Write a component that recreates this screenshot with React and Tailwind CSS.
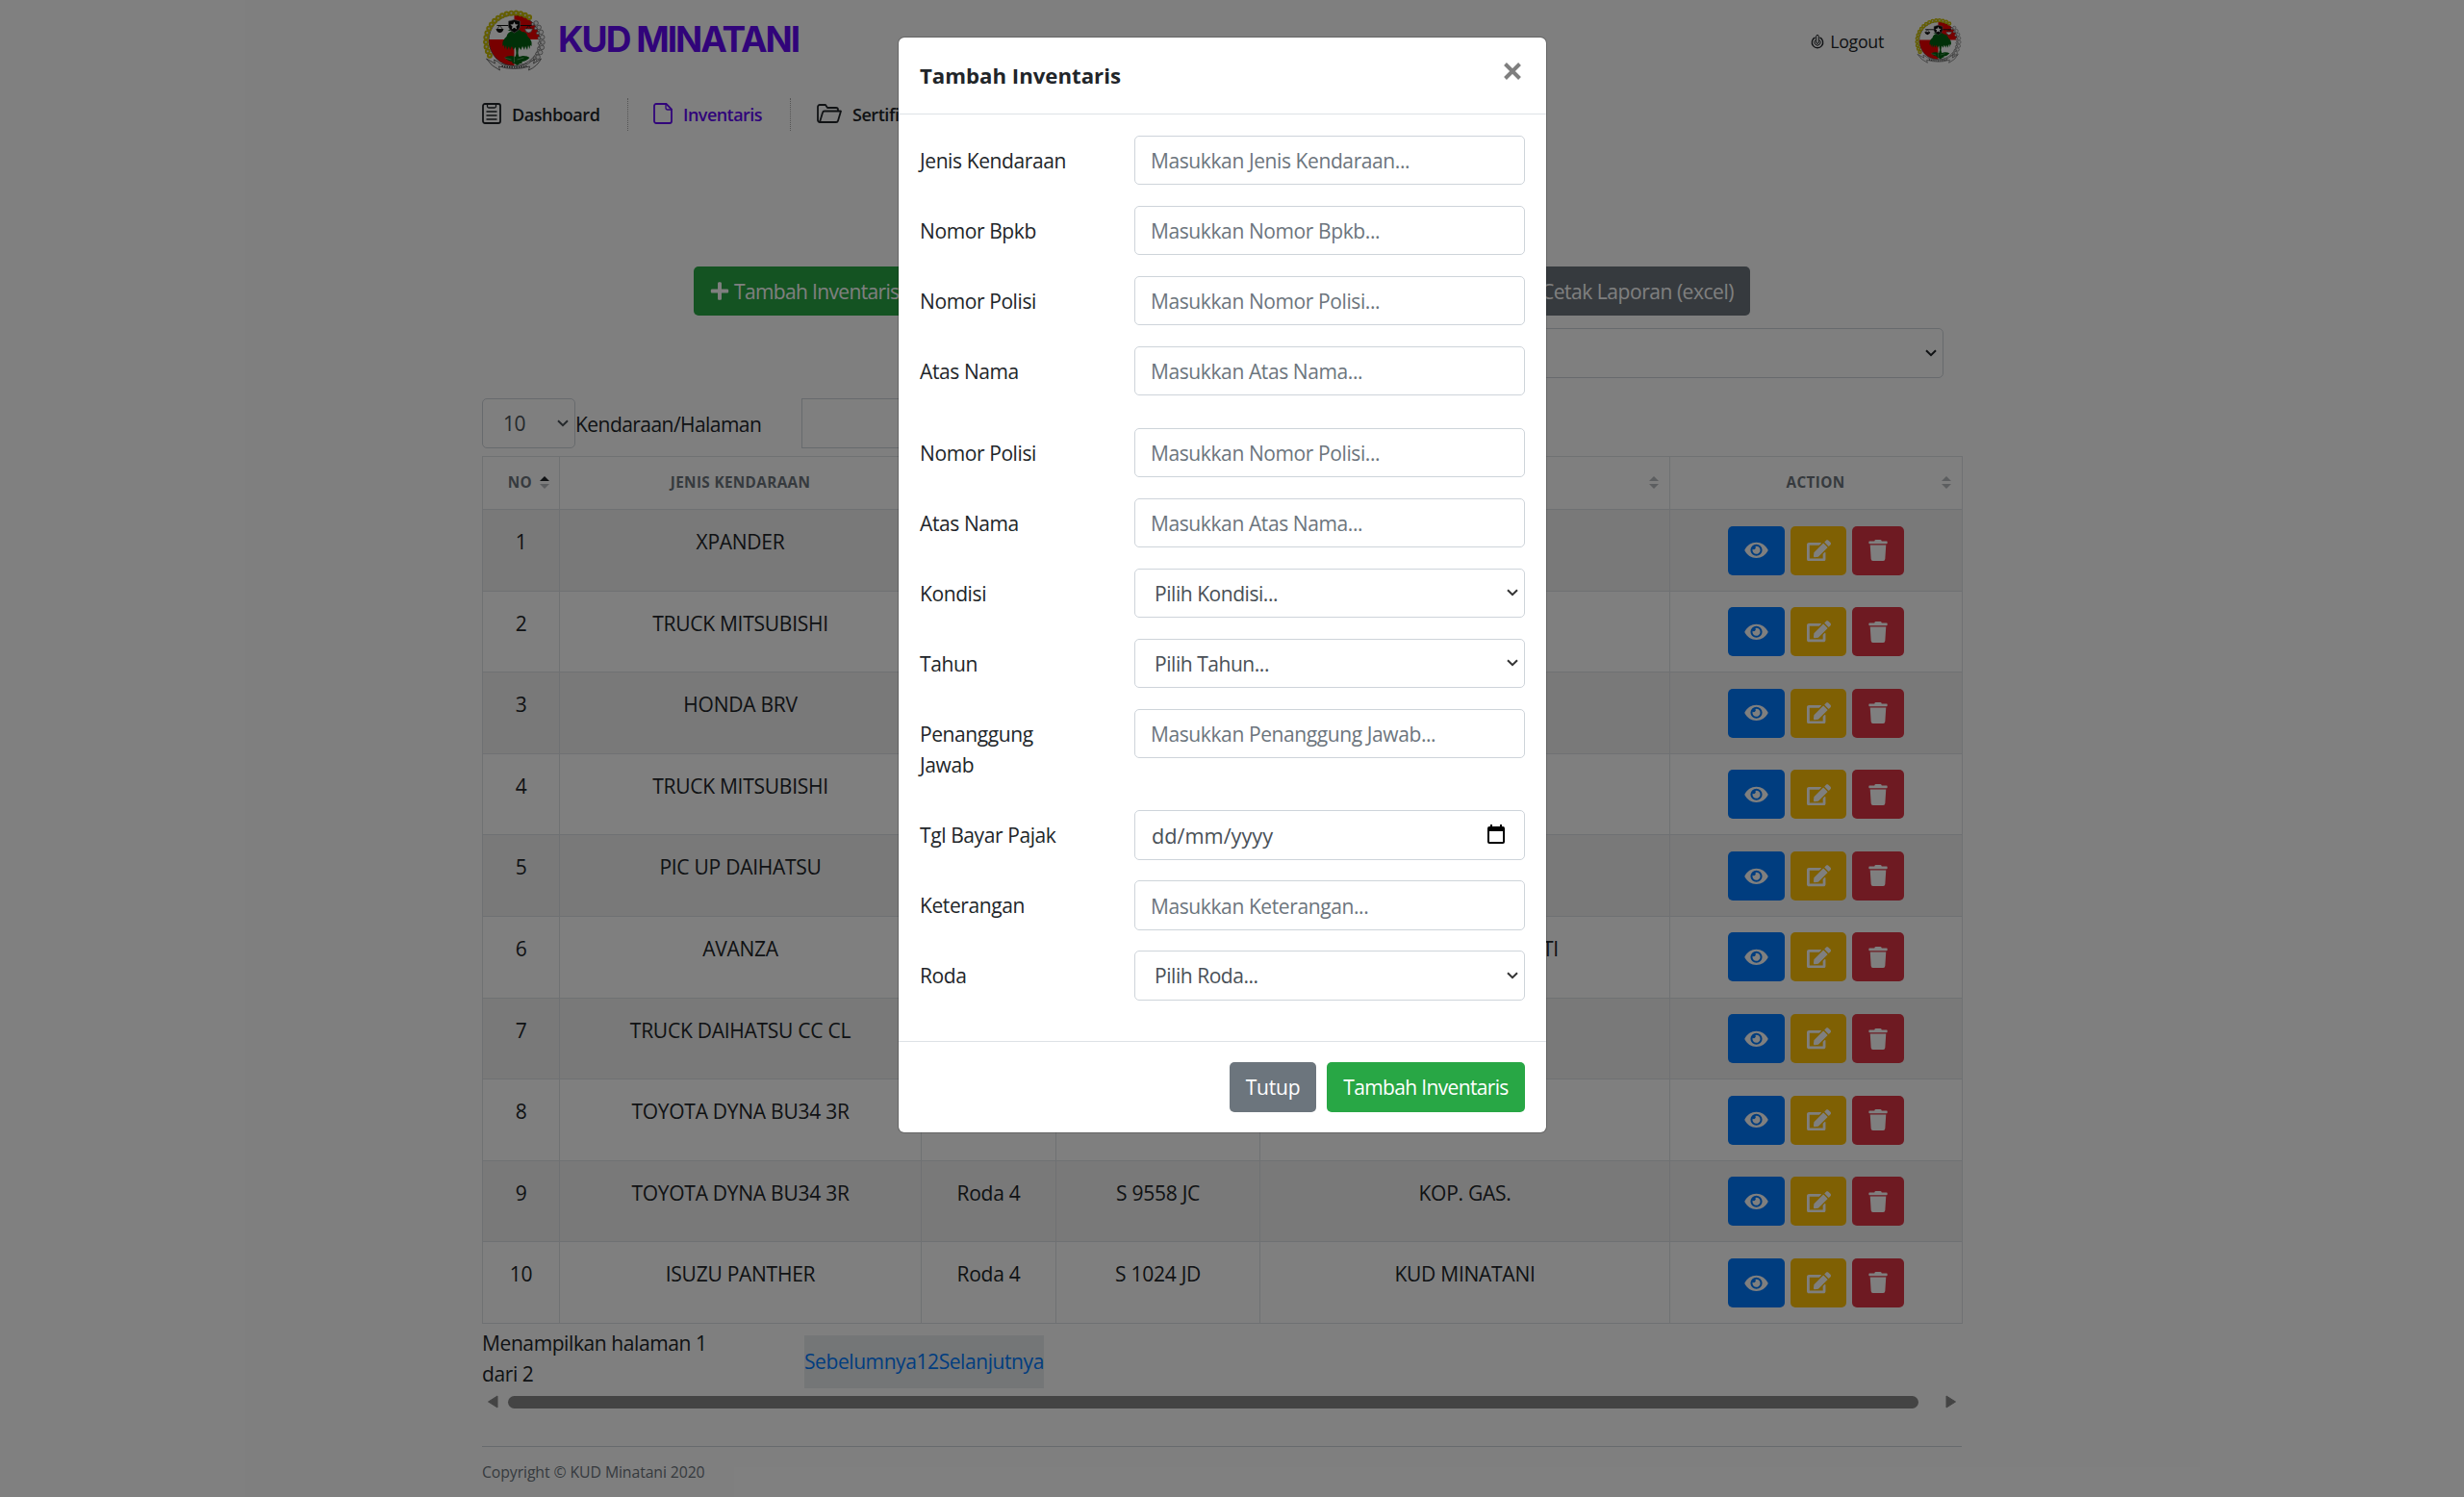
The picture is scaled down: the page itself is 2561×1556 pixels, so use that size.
import { FaEdit, FaEye, FaPlus, FaTrash } from "react-icons/fa";

const rows = [
  { name: "XPANDER" },
  { name: "TRUCK MITSUBISHI" },
  { name: "HONDA BRV" },
  { name: "TRUCK MITSUBISHI" },
  { name: "PIC UP DAIHATSU" },
  { name: "AVANZA", owner: "TI" },
  { name: "TRUCK DAIHATSU CC CL" },
  { name: "TOYOTA DYNA BU34 3R" },
  { name: "TOYOTA DYNA BU34 3R", wheels: "Roda 4", plate: "S 9558 JC", owner: "KOP. GAS." },
  { name: "ISUZU PANTHER", wheels: "Roda 4", plate: "S 1024 JD", owner: "KUD MINATANI" },
];

const fields = [
  { label: "Jenis Kendaraan", text: "Masukkan Jenis Kendaraan..." },
  { label: "Nomor Bpkb", text: "Masukkan Nomor Bpkb..." },
  { label: "Nomor Polisi", text: "Masukkan Nomor Polisi..." },
  { label: "Atas Nama", text: "Masukkan Atas Nama...", last: true },
  { label: "Nomor Polisi", text: "Masukkan Nomor Polisi..." },
  { label: "Atas Nama", text: "Masukkan Atas Nama..." },
  { label: "Kondisi", text: "Pilih Kondisi...", kind: "select" },
  { label: "Tahun", text: "Pilih Tahun...", kind: "select" },
  { label: "Penanggung Jawab", text: "Masukkan Penanggung Jawab..." },
  { label: "Tgl Bayar Pajak", text: "dd/mm/yyyy", kind: "date" },
  { label: "Keterangan", text: "Masukkan Keterangan..." },
  { label: "Roda", text: "Pilih Roda...", kind: "select" },
];

const chainBeads = Array.from({ length: 17 }, (_, i) => {
  const a = ((150 + i * 9.5) * Math.PI) / 180;
  return [33 + 29.5 * Math.cos(a), 33 + 29.5 * Math.sin(a)];
});

const cottonBuds = Array.from({ length: 9 }, (_, i) => {
  const a = ((-40 + i * 10.5) * Math.PI) / 180;
  return [33 + 29.5 * Math.cos(a), 33 + 29.5 * Math.sin(a)];
});

function Crest({ className }) {
  return (
    <svg viewBox="0 0 66 66" className={className} fill="none">
      <circle cx="33" cy="32" r="26.5" fill="#fff" />
      <path d="M33 31V5.500a26.500 26.500 0 0 1 26.500 25.500z" fill="#f00000" />
      <path d="M33 31v27.500A26.500 26.500 0 0 1 6.500 31z" fill="#f00000" />
      <circle cx="33" cy="32" r="26.5" stroke="#444" strokeWidth=".7" />
      {chainBeads.map(([x, y], i) => (
        <circle key={i} cx={x} cy={y} r="2" fill="#ddd" stroke="#c9bd00" strokeWidth="1.9" />
      ))}
      {cottonBuds.map(([x, y], i) => (
        <g key={i} stroke="#666" strokeWidth=".7" fill="#eee">
          <circle cx={x} cy={y} r="2.3" />
          <circle cx={x - 3.4} cy={y + 1} r="1.4" />
        </g>
      ))}
      <path d="M15 16.500h36" stroke="#111" strokeWidth="1.2" />
      <path d="M18 16.500l-3 4M18 16.500l3 4M48 16.500l-3 4M48 16.500l3 4" stroke="#111" strokeWidth=".7" />
      <path d="M14 20h8q-1 4-4 4t-4-4z" fill="#111" />
      <path d="M44 20h8q-1 4-4 4t-4-4z" fill="#fff" stroke="#555" strokeWidth=".6" />
      <path
        d="M26 22q3-2 7-1 6-1 8 2 5 0 6 5 5 4 4 10l-1.500-1-.5 4-1.500-4-1 5-2-4-1 4-2-4-1.500 4-2-3q-2 6 0 10l4-1q5 0 7 2-4 4-8 4 1 2-2 2l-3 2-3-2q-3 0-2-2-4 0-8-4 2-2 7-2l4 1q2-4 0-10l-2 3-1.500-4-2 4-1-4-2 4-1-5-1.500 4-.5-4-1.500 1q-1-6 4-10 1-5 7-6z"
        fill="#006010"
      />
      <path d="M23 50l7 2M43 50l-7 2M33 47v8" stroke="#8fc08f" strokeWidth=".6" />
      <path d="M27 12l6-1.500 6 1.500v6q-1 4-6 6-5-2-6-6z" fill="#0a0a0a" stroke="#888" strokeWidth=".7" />
      <path d="M33 12.500l1.200 2.800 3 .2-2.300 2 .8 3-2.700-1.700-2.700 1.700.8-3-2.300-2 3-.2z" fill="#fff" />
      <path d="M4 51q5 8 14 12l-1-4q16 5 32 0l-1 4q9-4 13-12l-8 5 1-4q-5 2-6 4-15 5-30 0-1-2-6-4l1 4z" fill="#f5f5f5" stroke="#555" strokeWidth=".8" />
      <path d="M20 58.500q13 3 26 0" stroke="#333" strokeWidth="1.600" strokeDasharray="1.5 1" />
    </svg>
  );
}

function Chevron({ className }) {
  return (
    <svg viewBox="0 0 12 8" className={className} fill="none" stroke="currentColor" strokeWidth="2">
      <path d="M1 1.2l5 5 5-5" />
    </svg>
  );
}

function SortArrows({ up = "#b9bcc0" }) {
  return (
    <svg viewBox="0 0 10 13" className="h-[13px] w-[10px]">
      <path d="M0 5l5-5 5 5z" fill={up} />
      <path d="M0 8h10l-5 5z" fill="#b9bcc0" />
    </svg>
  );
}

function Field({ label, text, kind, last }) {
  return (
    <div className={last ? "mb-[33.6px] flex items-start" : "mb-[21.6px] flex items-start"}>
      <label className="w-[223px] shrink-0 pt-[10px] pr-[65px] pb-[9px] leading-[32.4px] tracking-[-0.4px] text-[#212529]">
        {label}
      </label>
      {kind === "select" && (
        <div className="flex h-[51.3px] flex-1 items-center justify-between rounded-[5px] border border-[#ced4da] pt-[2px] pr-[6px] pl-[20px] tracking-[-0.45px] text-[#495057]">
          {text}
          <Chevron className="mb-[3px] h-[8px] w-[12px] text-[#333]" />
        </div>
      )}
      {kind === "date" && (
        <div className="flex h-[51.3px] flex-1 items-center justify-between rounded-[5px] border border-[#ced4da] pt-[2px] pr-[20px] pl-[17px] text-[21.7px] text-[#495057]">
          {text}
          <svg viewBox="0 0 18 20" className="mb-[5px] h-[20px] w-[18px] text-black">
            <path d="M3 0h2v2h8V0h2v2h1a2 2 0 0 1 2 2v14a2 2 0 0 1-2 2H2a2 2 0 0 1-2-2V4a2 2 0 0 1 2-2h1zM2 7v11h14V7z" fill="currentColor" fillRule="evenodd" />
          </svg>
        </div>
      )}
      {!kind && (
        <div className="flex h-[51.3px] flex-1 items-center rounded-[5px] border border-[#ced4da] pt-[3px] pl-[16px] tracking-[-0.4px] text-[#6c757d]">
          {text}
        </div>
      )}
    </div>
  );
}

function Modal() {
  return (
    <div className="w-[675px] rounded-[7px] border border-black/20 bg-white bg-clip-padding">
      <div className="flex h-[80px] items-start justify-between border-b border-[#dee2e6] px-[22px]">
        <h5 className="pt-[23px] text-[22.2px] leading-[34px] font-bold text-[#212529]">Tambah Inventaris</h5>
        <svg viewBox="0 0 18 18" className="mt-[26px] mr-[4px] h-[18px] w-[18px]" stroke="#7f7f7f" strokeWidth="4">
          <path d="M1.5 1.5l15 15M16.5 1.5l-15 15" />
        </svg>
      </div>
      <div className="h-[963px] px-[22px] pt-[22px]">
        {fields.map((f, i) => (
          <Field key={i} {...f} />
        ))}
      </div>
      <div className="flex h-[95px] items-start justify-end gap-[11px] border-t border-[#dee2e6] px-[22px] pt-[21px] leading-[53px] text-white">
        <button className="h-[52px] w-[90px] rounded-[5px] bg-[#6c757d] tracking-[-0.2px]">Tutup</button>
        <button className="h-[52px] w-[206px] rounded-[5px] bg-[#28a745] tracking-[-0.65px]">Tambah Inventaris</button>
      </div>
    </div>
  );
}

function Header() {
  return (
    <>
      <header className="flex h-[86px] items-center justify-between">
        <div className="flex items-center">
          <Crest className="h-[66px] w-[67px]" />
          <span className="ml-[12px] pb-[5px] font-['Inter',sans-serif] text-[37px] leading-[48px] font-bold tracking-[-2px] text-[#6209f5]">
            KUD MINATANI
          </span>
        </div>
        <div className="flex items-center">
          <svg viewBox="0 0 14 15" className="h-[15px] w-[14px]" fill="none" stroke="#212529" strokeWidth="1.4">
            <path d="M4.500 3a5.700 5.700 0 1 0 5 0" />
            <path d="M4.800 5.600a3.200 3.200 0 1 0 4.400 0" strokeWidth="1" />
            <path d="M5.700 8V1.700a1.300 1.300 0 0 1 2.600 0V8a1.300 1.300 0 0 1-2.600 0z" strokeWidth="1" />
          </svg>
          <span className="ml-[6px] pt-[1px] text-[17.8px] tracking-[-0.3px] text-[#212529]">Logout</span>
          <Crest className="ml-[32px] h-[50px] w-[49px]" />
        </div>
      </header>
      <nav className="flex h-[66px] items-center text-[18px] font-semibold tracking-[-0.45px] text-[#212529]">
        <a className="flex h-[34px] w-[152px] items-center border-r border-dotted border-[#aaa]">
          <svg viewBox="0 0 20 22" className="mb-[3px] h-[22px] w-[20px]" fill="none" stroke="#212529" strokeWidth="1.8">
            <rect x="1" y="1" width="18" height="20" rx="2" />
            <path d="M5.5 1v2.5a1.5 1.5 0 0 0 1.5 1.5h6a1.5 1.5 0 0 0 1.5-1.5V1M4.5 9h11M4.5 13h11M4.5 17h11" strokeWidth="1.3" />
          </svg>
          <span className="ml-[11px]">Dashboard</span>
        </a>
        <a className="flex h-[34px] w-[169px] items-center border-r border-dotted border-[#aaa] pl-[26px] text-[#6209f5]">
          <svg viewBox="0 0 20 22" className="mb-[3px] h-[22px] w-[20px]" fill="none" stroke="currentColor" strokeWidth="1.8">
            <path d="M3 1h10.5L19 6.5V19a2 2 0 0 1-2 2H3a2 2 0 0 1-2-2V3a2 2 0 0 1 2-2z" />
            <path d="M13 1v4a2 2 0 0 0 2 2h4" strokeWidth="1.3" />
          </svg>
          <span className="ml-[11px] tracking-[-0.55px]">Inventaris</span>
        </a>
        <a className="flex h-[34px] items-center pl-[27px]">
          <svg viewBox="0 0 26 20" className="mb-[3px] h-[20px] w-[26px]" fill="none" stroke="#212529" strokeWidth="1.8" strokeLinejoin="round">
            <path d="M3 19a2 2 0 0 1-2-2V3a2 2 0 0 1 2-2h6l2 3h9a2 2 0 0 1 2 2v1.500M3 19h17a2 2 0 0 0 2-1.500L25 7.500H8a2 2 0 0 0-2 1.500L3 19z" />
          </svg>
          <span className="ml-[11px]">Sertifikat</span>
        </a>
      </nav>
    </>
  );
}

const cell = "border border-[#dee2e6] p-0 align-top";

function Table() {
  return (
    <table className="w-[1538px] table-fixed border-collapse text-center tracking-[-0.26px]">
      <colgroup>
        <col className="w-[80px]" />
        <col className="w-[376px]" />
        <col className="w-[140px]" />
        <col className="w-[212px]" />
        <col className="w-[426px]" />
        <col className="w-[304px]" />
      </colgroup>
      <thead>
        <tr className="h-[55px] text-[15.300px] font-bold tracking-[0.35px] text-[#6c757d]">
          <th className={cell}>
            <div className="flex h-[53px] items-center justify-end gap-[8px] pr-[10px]">
              NO <SortArrows up="#212529" />
            </div>
          </th>
          <th className={cell}>
            <div className="leading-[53px]">JENIS KENDARAAN</div>
          </th>
          <th className={cell} />
          <th className={cell} />
          <th className={cell}>
            <div className="flex h-[53px] items-center justify-end pr-[11px]">
              <SortArrows />
            </div>
          </th>
          <th className={cell}>
            <div className="flex h-[53px] items-center pr-[11px]">
              <span className="flex-1 pl-[20px]">ACTION</span>
              <SortArrows />
            </div>
          </th>
        </tr>
      </thead>
      <tbody className="text-[#212529]">
        {rows.map((r, i) => (
          <tr key={i} className="h-[84.6px] odd:bg-[#f2f2f2]">
            <td className={cell}>
              <div className="pt-[17px] leading-[32.4px]">{i + 1}</div>
            </td>
            <td className={cell}>
              <div className="pt-[17px] leading-[32.4px]">{r.name}</div>
            </td>
            <td className={cell}>
              <div className="pt-[17px] leading-[32.4px]">{r.wheels}</div>
            </td>
            <td className={cell}>
              <div className="pt-[17px] leading-[32.4px]">{r.plate}</div>
            </td>
            <td className={cell}>
              <div className={r.owner === "TI" ? "pt-[17px] pl-[178px] leading-[32.4px]" : "pt-[17px] leading-[32.4px]"}>
                {r.owner}
              </div>
            </td>
            <td className={cell}>
              <div className="flex justify-center gap-[6px] pt-[16.500px] text-[21.6px] text-white">
                <span className="flex h-[51px] w-[59px] items-center justify-center rounded-[5px] bg-[#007bff]">
                  <FaEye className="h-[21.6px] w-[25px]" />
                </span>
                <span className="flex h-[51px] w-[58px] items-center justify-center rounded-[5px] bg-[#ffc107]">
                  <FaEdit className="h-[22.5px] w-[25px]" />
                </span>
                <span className="flex h-[51px] w-[54px] items-center justify-center rounded-[5px] bg-[#dc3545]">
                  <FaTrash className="h-[22px] w-[20px]" />
                </span>
              </div>
            </td>
          </tr>
        ))}
      </tbody>
    </table>
  );
}

export default function App() {
  return (
    <div className="relative h-[1556px] w-full overflow-hidden bg-white font-['Open_Sans',sans-serif] text-[21px] text-[#212529]">
      <main className="ml-[501px] w-[1538px]">
        <Header />
        <div className="mx-auto mt-[125px] flex w-[1098px] justify-between text-white">
          <button className="flex h-[51px] items-center rounded-[5px] bg-[#28a745] px-[17px] pt-[2px] tracking-[-0.65px]">
            <FaPlus className="mr-[5px] mb-[2px] h-[21px] w-[20px]" />
            Tambah Inventaris
          </button>
          <button className="h-[51px] rounded-[5px] bg-[#6c757d] px-[17px] pt-[2px] tracking-[-0.46px]">Cetak Laporan (excel)</button>
        </div>
        <div className="mt-[13px] mr-[19px] ml-auto flex h-[52px] w-[750px] items-center justify-end rounded-[5px] border border-[#ced4da] pr-[6px]">
          <Chevron className="h-[8px] w-[12px] text-[#212529]" />
        </div>
        <div className="mt-[21px] flex h-[52px] items-center">
          <div className="flex h-full w-[97px] items-center justify-between rounded-[5px] border border-[#ced4da] pt-[2px] pr-[6px] pl-[21px] tracking-[-0.4px] text-[#495057]">
            10
            <Chevron className="mb-[3px] h-[8px] w-[12px]" />
          </div>
          <span className="w-[235px] pt-[3px] tracking-[-0.55px]">Kendaraan/Halaman</span>
          <div className="h-full w-[260px] border border-[#ced4da]" />
        </div>
        <div className="mt-[8px]">
          <Table />
        </div>
        <div className="flex h-[73px] items-start">
          <p className="w-[335px] pt-[4px] pr-[90px] leading-[32.4px] tracking-[-0.4px]">Menampilkan halaman 1 dari 2</p>
          <div className="mt-[12px] h-[55px] bg-[#e9ecef] leading-[55px] tracking-[-0.42px] whitespace-nowrap text-[#007bff]">
            <span>Sebelumnya</span>
            <span>1</span>
            <span>2</span>
            <span>Selanjutnya</span>
          </div>
        </div>
        <div className="flex h-[17px] items-center px-[5px]">
          <svg viewBox="0 0 12 14" className="h-[14px] w-[12px]" fill="#888">
            <path d="M11 1v12L1.500 7z" stroke="#888" strokeLinejoin="round" />
          </svg>
          <div className="ml-[10px] h-[13px] w-[1466px] rounded-full bg-[#888]" />
          <svg viewBox="0 0 12 14" className="ml-auto h-[14px] w-[12px]" fill="#888">
            <path d="M1 1v12l9.500-6z" stroke="#888" strokeLinejoin="round" />
          </svg>
        </div>
        <footer className="mt-[37px] border-t border-[#ced4da] pt-[12px] text-[15.8px] leading-[28px] tracking-[-0.1px] text-[#6c757d]">
          Copyright © KUD Minatani 2020
        </footer>
      </main>
      <div className="absolute inset-0 bg-black/50 pt-[38px] pl-[933px]">
        <Modal />
      </div>
    </div>
  );
}
